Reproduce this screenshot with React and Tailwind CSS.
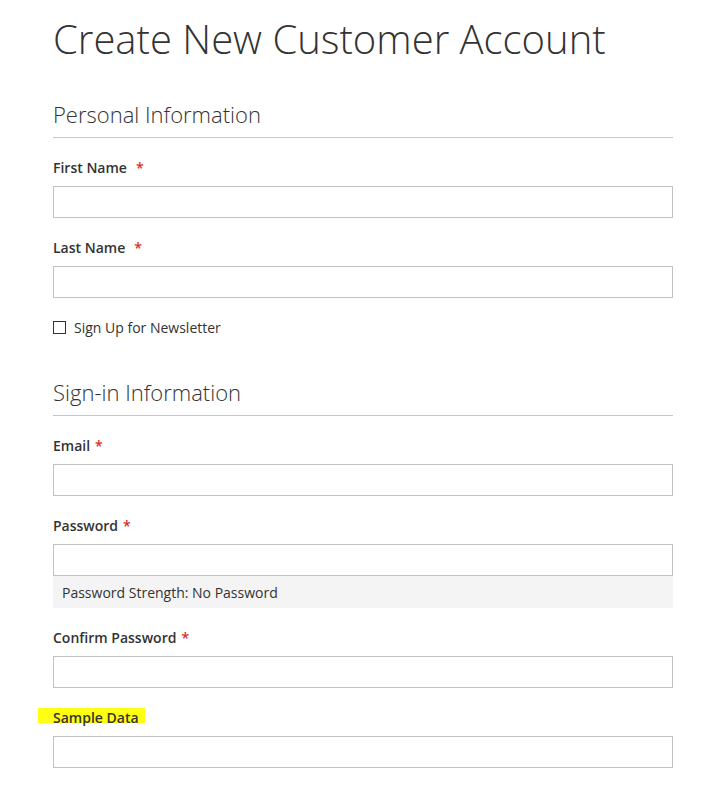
import React from 'react';

const font = { fontFamily: '"Open Sans", "Liberation Sans", sans-serif' };

function Label({ children, required, wide, highlight }) {
  return (
    <label className="relative block text-[14px] leading-[20px] font-semibold text-[#333] mb-[8px]">
      {highlight && (
        <span className="absolute left-[-15px] top-0 w-[107px] h-[15px] bg-[#ffff14]" />
      )}
      <span className="relative">{children}</span>
      {required && (
        <span className={`relative text-[#e02b27] ${wide ? 'ml-[9px]' : 'ml-[5px]'}`}>*</span>
      )}
    </label>
  );
}

function Field({ label, required, wide, highlight, type = 'text', children }) {
  return (
    <div className="mb-[20px]">
      <Label required={required} wide={wide} highlight={highlight}>{label}</Label>
      <input
        type={type}
        className="block w-full h-[32px] border border-[#c2c2c2] bg-white px-[9px] text-[14px] outline-none"
      />
      {children}
    </div>
  );
}

function SectionTitle({ children }) {
  return (
    <div className="border-b border-[#c6c6c6] pb-[9px] mb-[20px]">
      <h2 className="text-[22px] leading-[28px] font-light text-[#333]">{children}</h2>
    </div>
  );
}

export default function App() {
  return (
    <div className="min-h-screen bg-white" style={font}>
      <div className="w-[620px] ml-[53px] pt-[17px]">
        <h1 className="text-[40px] leading-[44px] font-light text-[#333] mb-[39px]">
          Create New Customer Account
        </h1>

        {/* Personal Information */}
        <SectionTitle>Personal Information</SectionTitle>
        <Field label="First Name" required wide />
        <Field label="Last Name" required wide />
        <label className="-mt-px flex items-center h-[20px] text-[14px] text-[#333]">
          <span className="w-[13px] h-[13px] border border-[#333] bg-white mr-[8px]" />
          Sign Up for Newsletter
        </label>

        {/* Sign-in Information */}
        <div className="mt-[41px]">
          <SectionTitle>Sign-in Information</SectionTitle>
        </div>
        <Field label="Email" required type="email" />
        <Field label="Password" required type="password">
          <div className="h-[32px] bg-[#f4f4f4] px-[9px] flex items-center text-[14px] text-[#333]">
            Password Strength: No Password
          </div>
        </Field>
        <Field label="Confirm Password" required type="password" />
        <Field label="Sample Data" highlight />
      </div>
    </div>
  );
}
